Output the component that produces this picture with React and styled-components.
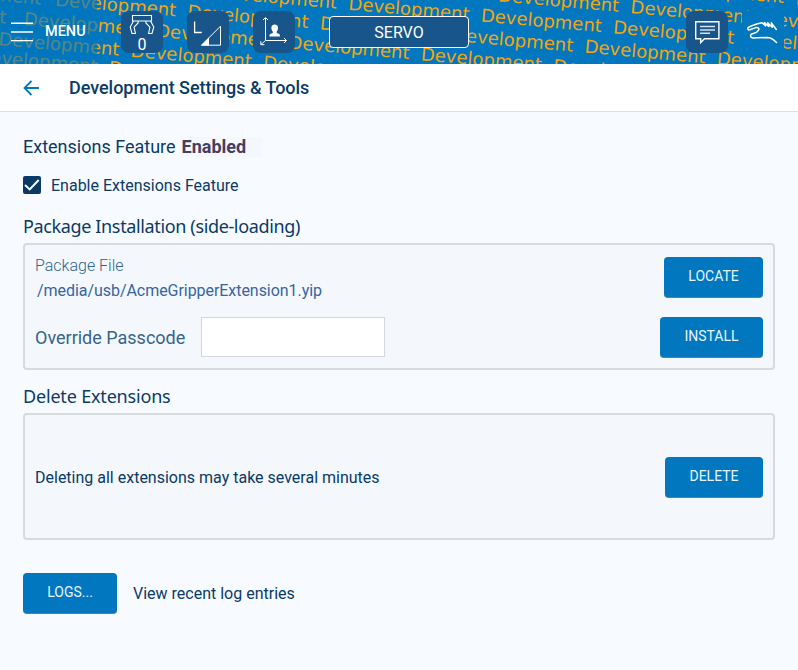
import React from "react";
import styled, { createGlobalStyle } from "styled-components";

const Global = createGlobalStyle`
  * { box-sizing: border-box; }
  body { margin: 0; background: #f7fbff; font-family: Roboto, sans-serif; color: #0b3a66; }
`;

const Page = styled.div`
  width: 798px;
  height: 670px;
  overflow: hidden;
  display: flex;
  flex-direction: column;
`;

const TopBar = styled.header`
  position: relative;
  display: flex;
  height: 64px;
  background: #0077bf;
  overflow: hidden;
`;

const Pattern = styled.svg`
  position: absolute;
  inset: 0;
  font-family: "DejaVu Sans", sans-serif;
  font-size: 18px;
  letter-spacing: 0.02px;
  fill: #f5a50c;
  white-space: pre;
`;

const Bar = styled.div`
  position: relative;
  flex: 1;
  display: flex;
  align-items: flex-start;
`;

const MenuButton = styled.button`
  width: 97px;
  height: 64px;
  margin-right: 24px;
  padding: 0 0 0 11px;
  border: 0;
  display: flex;
  align-items: center;
  gap: 12px;
  background: rgba(0, 119, 191, 0.65);
  color: #fff;
  font: 500 14.5px/16px Roboto, sans-serif;
`;

const Tile = styled.button`
  width: 42px;
  height: 42px;
  margin: 11px ${(p) => p.$gap}px 0 0;
  padding: 0;
  border: 0;
  border-radius: ${(p) => (p.$plain ? 0 : 8)}px;
  background: ${(p) => (p.$plain ? "#0077bf" : "#18558b")};
  color: #fff;
  display: flex;
  flex-direction: column;
  align-items: center;
  font: 16px/17px Roboto, sans-serif;
  svg { display: block; flex: none; }
`;

const ServoButton = styled.button`
  width: 140px;
  height: 32px;
  margin: 16px 217px 0 0;
  padding: 1px 0 0;
  border: 1px solid #fff;
  border-radius: 4px;
  background: #18558b;
  color: #fff;
  font: 16px/29px Roboto, sans-serif;
`;

const TitleBar = styled.div`
  height: 48px;
  padding-left: 23px;
  display: flex;
  align-items: center;
  gap: 29px;
  background: #fff;
  border-bottom: 1px solid #dcdfe1;
`;

const Title = styled.h1`
  margin: 0;
  font: 500 18px/24px Roboto, sans-serif;
  letter-spacing: -0.03px;
`;

const Content = styled.main`
  padding: 24px 23px 0;
  display: flex;
  flex-direction: column;
`;

const Status = styled.div`
  height: 22px;
  display: flex;
  align-items: center;
  gap: 4px;
  font-size: 18px;
  line-height: 22px;
`;

const StatusValue = styled.strong`
  width: 82px;
  padding-left: 2px;
  line-height: 20px;
  color: #463d60;
  background: #f4f7fb;
`;

const CheckRow = styled.label`
  height: 22px;
  margin-top: 16px;
  display: flex;
  align-items: center;
  gap: 10px;
  font-size: 16px;
`;

const CheckBox = styled.span`
  width: 18px;
  height: 18px;
  border-radius: 2px;
  background: #0b3a66;
  svg { display: block; }
`;

const SectionTitle = styled.h2`
  height: 26px;
  margin: ${(p) => p.$top}px 0 4px;
  font: 400 18px/26px "Noto Sans", sans-serif;
  letter-spacing: ${(p) => p.$spacing}px;
`;

const Panel = styled.section`
  height: 127px;
  padding: 2px 10px 0;
  border: 2px solid #d6dbdc;
  border-radius: 4px;
  background: #f4f8fc;
  display: flex;
  flex-direction: column;
  justify-content: center;
  gap: 19px;
`;

const PanelRow = styled.div`
  height: 41px;
  display: flex;
  align-items: center;
  justify-content: space-between;
  font-size: 16px;
`;

const FileInfo = styled.div`
  align-self: flex-start;
  margin-top: -3px;
`;

const FileLabel = styled.div`
  font-weight: 300;
  line-height: 24px;
  color: #2f658f;
`;

const FilePath = styled.div`
  padding-left: 2px;
  line-height: 26px;
  letter-spacing: -0.05px;
  color: #3765a0;
`;

const Field = styled.label`
  display: flex;
  align-items: center;
  gap: 16px;
  font-size: 18px;
  color: #35648a;
`;

const PassInput = styled.input`
  width: 184px;
  height: 40px;
  margin-bottom: 1px;
  border: 1px solid #d3d8dc;
  background: #fff;
  outline: 0;
`;

const Button = styled.button`
  width: ${(p) => p.$width}px;
  height: 41px;
  padding: 0 0 2px;
  border: 0;
  border-bottom: 1px solid #5c7d97;
  border-radius: 4px;
  background: #0077bf;
  color: #e9f4fb;
  font: 14px/38px Roboto, sans-serif;
`;

const LogsRow = styled.div`
  margin-top: 33px;
  display: flex;
  align-items: center;
  gap: 16px;
  font-size: 16px;
`;

/* First word of every slanted row: left edge, baseline and word count. */
const ROWS = [
  [663, -7.5, 2],
  [497.7, 1.2, 3],
  [215.7, -2, 5],
  [54.7, 5.7, 6],
  [-80, -6, 1],
  [-115, 13, 1],
  [23.4, 25, 5],
  [-2, 45, 4],
  [-24, 62, 2],
];

function Backdrop() {
  return (
    <Pattern width="798" height="64" viewBox="0 0 798 64" aria-hidden="true">
      {ROWS.map(([x, y, count]) => (
        <text key={`${x}:${y}`} xmlSpace="preserve" transform={`translate(${x} ${y}) rotate(5.06)`}>
          {Array(count).fill("Development").join("\u00a0\u00a0")}
        </text>
      ))}
    </Pattern>
  );
}

const line = { fill: "none", stroke: "#fff" };

const MenuIcon = () => (
  <svg width="22" height="20" {...line} strokeWidth="1.4">
    <path d="M0 1.3h22M0 10h22M0 18.6h22" />
  </svg>
);

const GripperIcon = () => (
  <svg width="42" height="25" {...line} strokeWidth="1.1">
    <path d="M11.5 4.5h19v5.5h-19zM12.5 10L9.2 16l1.8 6.5h3.4l-1.3-6.3 4-4.2V10M29.5 10l3.3 6-1.8 6.5h-3.4l1.3-6.3-4-4.2V10" />
  </svg>
);

const PayloadIcon = () => (
  <svg width="42" height="42" {...line}>
    <path strokeWidth="1.3" d="M7.6 10.5v11h7.2" />
    <path d="M14.5 34.2h19v-19z" />
    <path fill="#fff" stroke="none" d="M14 34.5h8v-8z" />
  </svg>
);

const FrameIcon = () => (
  <svg width="42" height="42" {...line}>
    <path d="M12.5 7v22.5H33.5M10 9l2.5-2.5L15 9M31 27l2.5 2.5L31 32M12.5 29.5l-4.5 4M7.8 30.2v3.5h3.6" />
    <path fill="#fff" stroke="none" d="M21.7 13.5c3.8 0 4.2 4.5 2 7.2v1.4c2.2.6 3.3.8 3.3 3.4H16.4c0-2.6 1.1-2.8 3.4-3.4v-1.4c-2.3-2.7-1.8-7.2 1.9-7.2z" />
  </svg>
);

const MessageIcon = () => (
  <svg width="42" height="42" {...line} strokeWidth="1.4">
    <path d="M9.7 10.8h23.2v17H18.5l-3.8 3.8v-3.8h-5z" />
    <path stroke="#d6dfeb" d="M14 15.5h15M14 19h15M14 22.3h10" />
  </svg>
);

const HandIcon = () => (
  <svg width="42" height="42" {...line} strokeWidth="1.5" strokeLinecap="round" strokeLinejoin="round">
    <path d="M34.3 18.5l-5-6.7 1 4.4-4.6-4.5 1.3 3.9-4.6-4 1.2 3.4-3.6-3.3C14.5 12.2 10.5 14.7 7 16c-1.8.9-1.6 3.4.8 2.8L14 16.6c2.6-.5 3.4 1.4 2.4 2.8-1.4 2.4-3.2 2.6-6.2 3.4-2.4.9-2.2 3.9.6 4.1l14.4-.4c4.2 0 6.5 2 9.3 5" />
  </svg>
);

const BackIcon = () => (
  <svg width="17" height="16" fill="none" stroke="#0077bf" strokeWidth="1.8">
    <path d="M16 8H1.5M8.5 1L1.5 8l7 7" />
  </svg>
);

const CheckIcon = () => (
  <svg width="18" height="18" {...line} strokeWidth="2">
    <path d="M2 9l4.7 4.4L15.7 4" />
  </svg>
);

export default function App() {
  return (
    <Page>
      <Global />
      <TopBar>
        <Backdrop />
        <Bar>
          <MenuButton><MenuIcon />MENU</MenuButton>
          <Tile $gap={24}><GripperIcon />0</Tile>
          <Tile $gap={24}><PayloadIcon /></Tile>
          <Tile $gap={34}><FrameIcon /></Tile>
          <ServoButton>SERVO</ServoButton>
          <Tile $gap={14}><MessageIcon /></Tile>
          <Tile $gap={0} $plain><HandIcon /></Tile>
        </Bar>
      </TopBar>
      <TitleBar>
        <BackIcon />
        <Title>Development Settings &amp; Tools</Title>
      </TitleBar>
      <Content>
        <Status>Extensions Feature <StatusValue>Enabled</StatusValue></Status>
        <CheckRow>
          <CheckBox><CheckIcon /></CheckBox>
          Enable Extensions Feature
        </CheckRow>
        <SectionTitle $top={17} $spacing={-0.36}>Package Installation (side-loading)</SectionTitle>
        <Panel>
          <PanelRow>
            <FileInfo>
              <FileLabel>Package File</FileLabel>
              <FilePath>/media/usb/AcmeGripperExtension1.yip</FilePath>
            </FileInfo>
            <Button $width={99}>LOCATE</Button>
          </PanelRow>
          <PanelRow>
            <Field>Override Passcode<PassInput /></Field>
            <Button $width={103}>INSTALL</Button>
          </PanelRow>
        </Panel>
        <SectionTitle $top={13} $spacing={-0.18}>Delete Extensions</SectionTitle>
        <Panel>
          <PanelRow>
            Deleting all extensions may take several minutes
            <Button $width={98}>DELETE</Button>
          </PanelRow>
        </Panel>
        <LogsRow>
          <Button $width={94}>LOGS...</Button>
          View recent log entries
        </LogsRow>
      </Content>
    </Page>
  );
}
